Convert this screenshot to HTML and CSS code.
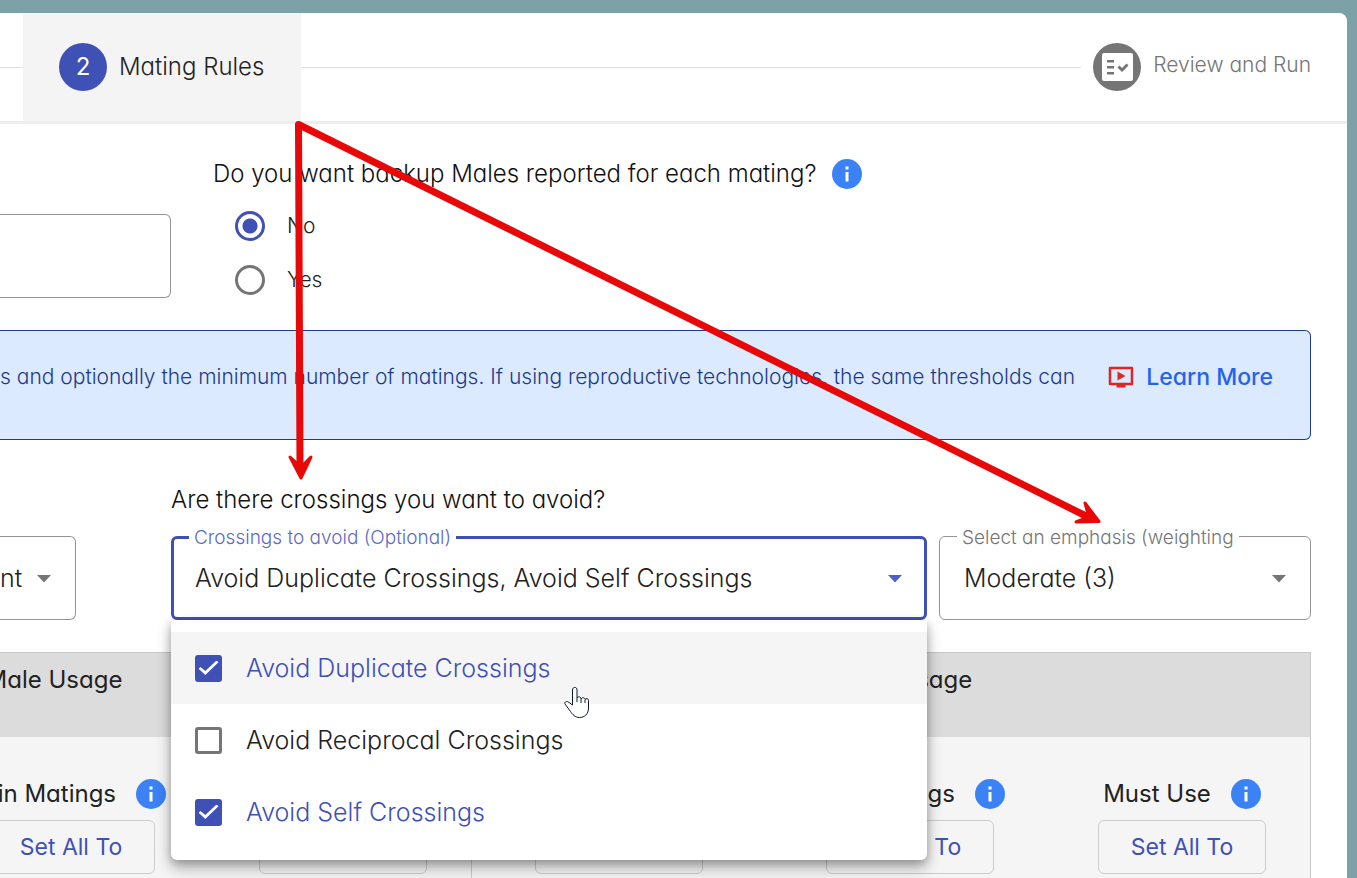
FILE: index.html
```html
<!DOCTYPE html>
<html lang="en">
<head>
<meta charset="utf-8">
<meta name="viewport" content="width=device-width, initial-scale=1">
<title>Mating Rules</title>
<link rel="stylesheet" href="styles.css">
</head>
<body>
<svg class="defs" aria-hidden="true">
  <symbol id="info" viewBox="0 0 30 30"><circle cx="15" cy="15" r="15" fill="#3b82f6"/><path d="M13.500 7.500h3v3h-3zM13.500 13h3v9.500h-3z" fill="#fff"/></symbol>
  <symbol id="caret" viewBox="0 0 14 8"><path d="M0 0h14L7 7.500z" fill="currentColor"/></symbol>
</svg>
<main class="panel">
  <nav class="stepper" aria-label="Steps">
    <span class="rail rail-start"></span>
    <button class="step step-active" type="button"><span class="step-icon">2</span><span>Mating Rules</span></button>
    <span class="rail"></span>
    <button class="step step-last" type="button">
      <span class="step-icon">
        <svg width="48" height="48" viewBox="0 0 48 48" aria-hidden="true"><path fill="#fff" fill-rule="evenodd" d="M11 10h27a2 2 0 0 1 2 2v24a2 2 0 0 1-2 2H11a2 2 0 0 1-2-2V12a2 2 0 0 1 2-2zM14 17v2.500h7V17zM14 23v2.500h7V23zM14 29v2.500h7V29zM24.500 24.500l4.500 4.500 6.500-6.500-2-2-4.500 4.500-2.500-2.500z"/></svg>
      </span><span class="step-label">Review and Run</span></button>
  </nav>

  <form class="content">
    <div class="top-row">
      <input class="box text-box" type="text" aria-label="Name">
      <div class="backup" role="radiogroup" aria-labelledby="backup-q">
        <div class="question-row"><span class="question" id="backup-q">Do you want backup Males reported for each mating?</span><svg class="info"><use href="#info"/></svg></div>
        <label class="radio-row"><input class="radio" type="radio" name="backup" checked><span>No</span></label>
        <label class="radio-row"><input class="radio" type="radio" name="backup"><span>Yes</span></label>
      </div>
    </div>

    <div class="banner">
      <p class="banner-text">s and optionally the minimum number of matings. If using reproductive technologies, the same thresholds can</p>
      <a class="learn" href="#">
        <svg width="26" height="24" viewBox="0 0 26 24" aria-hidden="true"><path d="M2 3h22v16H2z" fill="none" stroke="#dc2626" stroke-width="2.500" stroke-linejoin="round"/><path d="M9.500 6.500v9l8-4.500zM8.500 19h9v3.500h-9z" fill="#dc2626"/></svg>
        <span>Learn More</span></a>
    </div>

    <div class="fields">
      <div class="field field-first">
        <select class="box select" aria-label="Percent"><option>nt</option></select>
        <svg class="caret"><use href="#caret"/></svg>
      </div>
      <div class="crossings">
        <span class="question">Are there crossings you want to avoid?</span>
        <div class="field field-active">
          <select class="box select" id="crossings"><option>Avoid Duplicate Crossings, Avoid Self Crossings</option></select>
          <label class="float" for="crossings">Crossings to avoid (Optional)</label>
          <svg class="caret"><use href="#caret"/></svg>
          <div class="menu">
            <label class="option option-on option-hover"><input class="check" type="checkbox" checked><span>Avoid Duplicate Crossings</span></label>
            <label class="option"><input class="check" type="checkbox"><span>Avoid Reciprocal Crossings</span></label>
            <label class="option option-on"><input class="check" type="checkbox" checked><span>Avoid Self Crossings</span></label>
          </div>
        </div>
      </div>
      <div class="field field-emphasis">
        <select class="box select" id="emphasis"><option>Moderate (3)</option></select>
        <label class="float" for="emphasis">Select an emphasis (weighting</label>
        <svg class="caret"><use href="#caret"/></svg>
      </div>
    </div>

    <table class="usage">
      <colgroup><col class="c1"><col class="c2"><col class="c3"><col><col class="c2"><col class="c3"></colgroup>
      <thead><tr><th colspan="3">Male Usage</th><th colspan="3">Female Usage</th></tr></thead>
      <tbody><tr>
        <td></td>
        <td><div class="cell"><span class="cell-head">Min Matings<svg class="info"><use href="#info"/></svg></span><button class="set" type="button">Set All To</button></div></td>
        <td><div class="cell"><span class="cell-head"></span><button class="set" type="button" aria-label="Set all"></button></div></td>
        <td class="divided"><div class="cell"><span class="cell-head"></span><button class="set" type="button" aria-label="Set all"></button></div></td>
        <td><div class="cell"><span class="cell-head">Min Matings<svg class="info"><use href="#info"/></svg></span><button class="set" type="button">Set All To</button></div></td>
        <td><div class="cell"><span class="cell-head">Must Use<svg class="info"><use href="#info"/></svg></span><button class="set" type="button">Set All To</button></div></td>
      </tr></tbody>
    </table>
  </form>
</main>

<svg class="overlay" width="1357" height="878" viewBox="0 0 1357 878" aria-hidden="true">
  <g fill="none" stroke="#e80808" stroke-width="7" stroke-linejoin="round" stroke-linecap="round"><path d="M300 466L298.500 124.500 1086 516"/></g>
  <g fill="#e80808" stroke="#e80808" stroke-width="3" stroke-linejoin="round"><path d="M301 478l-11-21 9 8h4l8-8z"/><path d="M1099 521.500l-23 .5 10-4 2-4-3-11z"/></g>
  <path d="M572.500 705v-15c0-3.500 4.500-3.500 4.500 0v8c1-2 4-1.500 4 1 1-2 4-1.500 4 .5 1-1.500 3.500-1 3.500 1V708c0 6-4 9.500-9 9.500-4.500 0-7-3-9-6l-5.500-7.500c-1-2 2-3.500 4-1.500zM577 698v4M581 699v4M585 700v3" fill="#fff" stroke="#111827" stroke-width="1"/>
</svg>
</body>
</html>
```
FILE: styles.css
```css
* { box-sizing: border-box; }

body {
  margin: 0;
  position: relative;
  height: 100vh;
  overflow: hidden;
  background: #7ca1a7;
  color: #222;
  font: 300 24px/32px Inter, "Open Sans", sans-serif;
  font-feature-settings: "cv11";
}

button, input, select { font: inherit; font-feature-settings: inherit; color: inherit; }
button { cursor: pointer; }

.defs { position: absolute; width: 0; height: 0; }

.panel {
  margin: 13px 10px 0 0;
  min-height: 100vh;
  overflow: hidden;
  background: #fff;
  border-top-right-radius: 8px;
}

.stepper {
  display: flex;
  align-items: center;
  height: 111px;
  padding-right: 36px;
  border-bottom: 3px solid #eee;
}
.rail { flex: 1; height: 1px; background: #ddd; }
.rail-start { flex: 0 0 23px; }
.step {
  display: flex;
  align-items: center;
  gap: 12px;
  height: 100%;
  padding: 0 37px 0 36px;
  border: 0;
  background: none;
  white-space: nowrap;
}
.step-active { background: #f4f4f4; }
.step-icon {
  display: grid;
  place-items: center;
  width: 48px;
  height: 48px;
  border-radius: 50%;
  background: #3f51b5;
  color: #fff;
  font-weight: 400;
}
.step-last { padding: 0 0 0 12px; color: #757575; font-size: 21px; }
.step-last .step-icon { background: #757575; }
.step-label { padding-bottom: 4px; }

.content { padding: 32px 36px 0 0; }

.top-row { display: flex; gap: 42px; align-items: flex-start; }
.box {
  display: block;
  width: 100%;
  height: 84px;
  padding: 0 24px;
  border: 1px solid #949494;
  border-radius: 6px;
  background: #fff;
  appearance: none;
}
.select { font-size: 25px; }
.text-box { width: 171px; margin-top: 58px; border-left: 0; border-radius: 0 6px 6px 0; }
.question { color: #111; white-space: nowrap; }
.question-row { display: flex; align-items: center; gap: 16px; height: 36px; margin-bottom: 7px; }
.info { flex: none; width: 30px; height: 30px; }
.radio-row { display: flex; align-items: center; gap: 22px; height: 54px; padding-left: 22px; font-size: 21px; }
.radio {
  appearance: none;
  width: 30px;
  height: 30px;
  margin: 0;
  border: 3px solid #757575;
  border-radius: 50%;
}
.radio:checked { border-color: #3f51b5; background: radial-gradient(circle, #3f51b5 7px, #fff 8px); }

.banner {
  display: flex;
  justify-content: space-between;
  align-items: flex-start;
  height: 110px;
  margin-top: 23px;
  padding: 30px 37px 0 0;
  border: 1px solid #1e3a8a;
  border-left: 0;
  border-radius: 0 6px 6px 0;
  background: #dbeafe;
}
.banner-text { margin: 0; color: #1e3a8a; font-size: 21px; white-space: nowrap; }
.learn {
  display: flex;
  align-items: center;
  gap: 12px;
  color: #2563eb;
  font-size: 23px;
  font-weight: 500;
  text-decoration: none;
  white-space: nowrap;
}

.fields { display: flex; align-items: flex-end; gap: 12px; margin-top: 44px; }
.field { position: relative; }
.field-first { width: 76px; margin-right: 83px; }
.field-first .box { padding: 0; border-left: 0; border-radius: 0 6px 6px 0; }
.crossings { flex: 756; min-width: 0; display: grid; gap: 20px; }
.field-emphasis { flex: 372; min-width: 0; }
.field-active .box { padding: 0 21px; border: 3px solid #3f51b5; }
.float {
  position: absolute;
  top: -10px;
  left: 18px;
  padding: 0 5px;
  background: #fff;
  color: #757575;
  font-size: 19px;
  line-height: 24px;
  white-space: nowrap;
}
.field-active .float { color: #5c6bc0; }
.caret { position: absolute; top: 39px; right: 25px; width: 14px; height: 8px; color: #757575; pointer-events: none; }
.field-active .caret { color: #4f5fc4; }

.menu {
  position: absolute;
  z-index: 2;
  top: 100%;
  left: 0;
  right: 0;
  padding: 12px 0;
  border-radius: 0 0 6px 6px;
  background: #fff;
  box-shadow: 0 8px 15px rgba(0, 0, 0, .28), 0 3px 8px rgba(0, 0, 0, .22);
}
.option { display: flex; align-items: center; gap: 24px; height: 72px; padding: 0 24px; font-size: 25px; }
.option-on { color: #3f51b5; }
.option-hover { background: #f5f5f5; }
.check {
  appearance: none;
  width: 27px;
  height: 27px;
  margin: 0;
  border: 3px solid #757575;
  border-radius: 3px;
}
.check:checked {
  display: grid;
  place-items: center;
  border-color: #3f51b5;
  background: #3f51b5;
}
.check:checked::before {
  content: "";
  width: 20px;
  height: 15px;
  background: #fff;
  clip-path: polygon(0 55%, 10% 43%, 34% 70%, 90% 0, 100% 12%, 34% 96%);
}

.usage {
  width: calc(100% + 364px);
  margin: 32px 0 0 -364px;
  table-layout: fixed;
  border-collapse: separate;
  border-spacing: 0;
  border: 1px solid #c8c8c8;
  background: #f5f5f5;
  font-weight: 400;
}
.c1 { width: 290px; }
.c2 { width: 288px; }
.c3 { width: 256px; }
.usage th { height: 84px; padding: 11px 0 0; background: #dcdcdc; font-weight: 400; vertical-align: top; }
.usage td { padding: 41px 0 40px; }
.divided { border-left: 1px solid #ccc; }
.cell { display: grid; justify-items: center; gap: 10px; }
.cell-head { display: flex; align-items: center; gap: 20px; height: 32px; white-space: nowrap; }
.set {
  width: 168px;
  height: 54px;
  padding: 0;
  border: 1px solid #ccc;
  border-radius: 6px;
  background: transparent;
  color: #3f51b5;
  font-size: 23px;
  white-space: nowrap;
}

.overlay { position: absolute; z-index: 3; top: 0; left: 0; pointer-events: none; }
```
